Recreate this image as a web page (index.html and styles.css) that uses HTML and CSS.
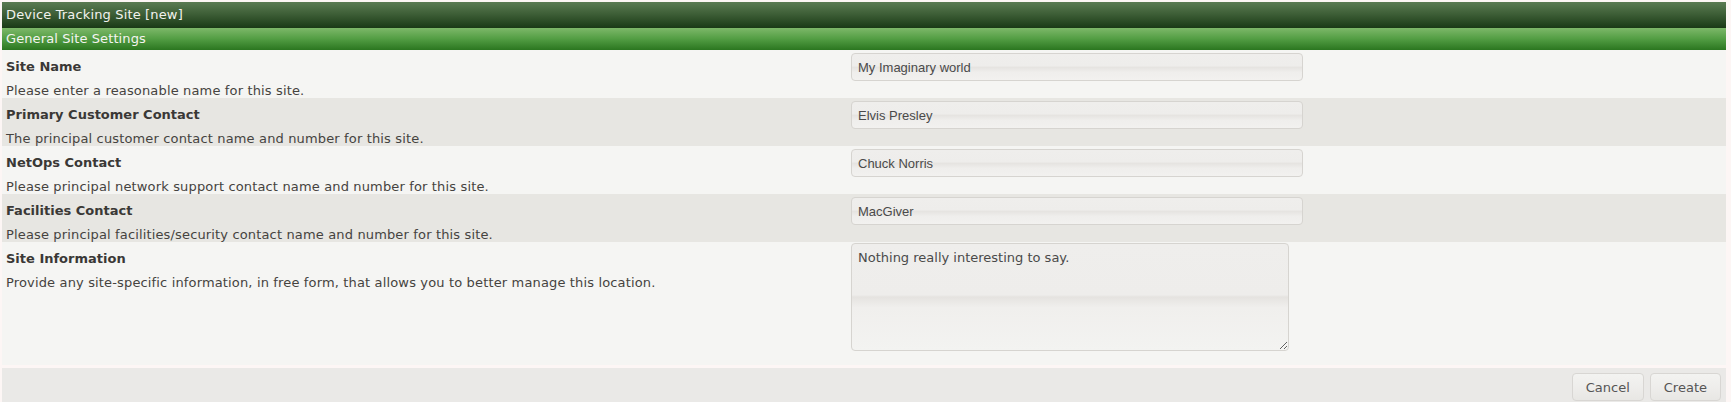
FILE: index.html
```html
<!DOCTYPE html>
<html>
<head>
<meta charset="utf-8">
<title>Device Tracking Site [new]</title>
<link rel="stylesheet" href="styles.css">
</head>
<body>
<div class="panel">
  <div class="title-bar">Device Tracking Site [new]</div>
  <div class="section-bar">General Site Settings</div>
  <form class="form">
    <div class="rows">
      <div class="row">
        <div class="label-cell">
          <div class="label">Site Name</div>
          <div class="desc">Please enter a reasonable name for this site.</div>
        </div>
        <div class="field-cell"><input class="text-input" type="text" value="My Imaginary world"></div>
      </div>
      <div class="row alt">
        <div class="label-cell">
          <div class="label">Primary Customer Contact</div>
          <div class="desc">The principal customer contact name and number for this site.</div>
        </div>
        <div class="field-cell"><input class="text-input" type="text" value="Elvis Presley"></div>
      </div>
      <div class="row">
        <div class="label-cell">
          <div class="label">NetOps Contact</div>
          <div class="desc">Please principal network support contact name and number for this site.</div>
        </div>
        <div class="field-cell"><input class="text-input" type="text" value="Chuck Norris"></div>
      </div>
      <div class="row alt">
        <div class="label-cell">
          <div class="label">Facilities Contact</div>
          <div class="desc">Please principal facilities/security contact name and number for this site.</div>
        </div>
        <div class="field-cell"><input class="text-input" type="text" value="MacGiver"></div>
      </div>
      <div class="row tall">
        <div class="label-cell">
          <div class="label">Site Information</div>
          <div class="desc">Provide any site-specific information, in free form, that allows you to better manage this location.</div>
        </div>
        <div class="field-cell"><textarea class="text-area" spellcheck="false">Nothing really interesting to say.</textarea></div>
      </div>
    </div>
    <div class="footer">
      <button type="button" class="btn">Cancel</button>
      <button type="button" class="btn">Create</button>
    </div>
  </form>
</div>
</body>
</html>
```

FILE: styles.css
```css
html, body {
  margin: 0;
  padding: 0;
}
body {
  background: #fdf6f5;
  padding: 2px 5px 0 2px;
  font-family: "DejaVu Sans", Verdana, sans-serif;
  font-size: 13px;
  color: #3a3a3a;
  overflow: hidden;
}
.panel {
  display: flex;
  flex-direction: column;
}
.title-bar {
  height: 26px;
  line-height: 25px;
  padding-left: 4px;
  font-size: 13px;
  letter-spacing: 0.15px;
  color: #f2f2ee;
  background: linear-gradient(to bottom, #5b7b53 0%, #3e5f37 45%, #1a3a16 100%);
}
.section-bar {
  height: 22px;
  line-height: 22px;
  padding-left: 4px;
  font-size: 13px;
  letter-spacing: 0.1px;
  color: #f4f4f0;
  background: linear-gradient(to bottom, #7db869 0%, #529d43 50%, #2b7620 100%);
}
.form {
  margin: 0;
  display: flex;
  flex-direction: column;
  gap: 3px;
}
.rows {
  display: flex;
  flex-direction: column;
}
.row {
  display: grid;
  grid-template-columns: 849px 1fr;
  height: 48px;
  background: #f5f5f3;
}
.row.alt {
  background: #e7e6e2;
}
.row.tall {
  height: 123px;
}
.label-cell {
  padding: 9px 0 0 4px;
  display: flex;
  flex-direction: column;
  gap: 9px;
}
.label {
  font-weight: bold;
  line-height: 15px;
  color: #3a3836;
}
.desc {
  line-height: 15px;
  letter-spacing: 0.15px;
  color: #454340;
}
.field-cell {
  padding-top: 3px;
}
.row.tall .field-cell {
  padding-top: 1px;
}
.text-input {
  box-sizing: border-box;
  width: 452px;
  height: 28px;
  margin: 0;
  padding: 0 6px;
  border: 1px solid #d6d4d0;
  border-radius: 4px;
  font-family: "Liberation Sans", Arial, sans-serif;
  font-size: 13px;
  color: #4a4a4a;
  background: linear-gradient(to bottom, #efeeec 0%, #eeedeb 45%, #e6e4e1 52%, #efeeec 70%, #f2f1ef 100%);
  outline: none;
}
.text-area {
  box-sizing: border-box;
  display: block;
  width: 438px;
  height: 108px;
  margin: 0;
  padding: 6px 6px;
  border: 1px solid #d6d4d0;
  border-radius: 4px;
  font-family: "DejaVu Sans", Verdana, sans-serif;
  font-size: 13px;
  line-height: 15px;
  color: #4a4a4a;
  background: linear-gradient(to bottom, #efeeec 0%, #eeedeb 48%, #e5e3e0 50%, #f0efed 60%, #f3f3f1 100%);
  outline: none;
  resize: both;
}
.footer {
  display: flex;
  justify-content: flex-end;
  gap: 6px;
  padding: 5px 5px 5px 0;
  background: #eae9e7;
}
.btn {
  box-sizing: border-box;
  height: 28px;
  padding: 0 13px;
  margin: 0;
  border: 1px solid #d8d6d3;
  border-radius: 4px;
  font-family: "DejaVu Sans", Verdana, sans-serif;
  font-size: 13px;
  color: #555;
  background: linear-gradient(to bottom, #f3f3f1 0%, #eeedeb 50%, #e8e7e4 100%);
}
```
